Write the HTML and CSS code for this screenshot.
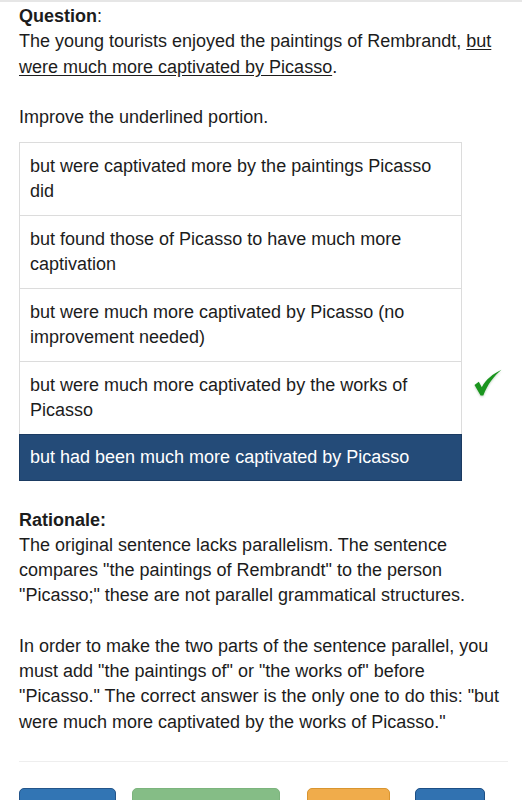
FILE: index.html
```html
<!DOCTYPE html>
<html>
<head>
<meta charset="utf-8">
<link rel="stylesheet" href="styles.css">
</head>
<body>
<div class="topbar"></div>
<div class="page">
  <div class="question">
    <div><b>Question</b>:</div>
    <p class="para">The young tourists enjoyed the paintings of Rembrandt, <span class="ul">but</span> <span class="ul">were much more captivated by Picasso</span>.</p>
    <div class="blank"></div>
    <p class="para">Improve the underlined portion.</p>
  </div>
  <div class="answers">
    <ul class="options">
      <li class="option">but were captivated more by the paintings Picasso did</li>
      <li class="option">but found those of Picasso to have much more captivation</li>
      <li class="option">but were much more captivated by Picasso (no improvement needed)</li>
      <li class="option">but were much more captivated by the works of Picasso</li>
      <li class="option selected">but had been much more captivated by Picasso</li>
    </ul>
    <div class="marks">
      <div class="mark"></div>
      <div class="mark"></div>
      <div class="mark"></div>
      <div class="mark tall">
        <svg class="check" width="28" height="28" viewBox="0 0 28 28">
          <path d="M0.5 16 L4.8 12.8 L7.8 18.2 C12 10.5 18.5 5 27.5 0.8 C20 7 13.5 15.5 9.3 26.5 L6.6 26.5 Z" fill="#1a951e"/>
        </svg>
      </div>
    </div>
  </div>
  <div class="rationale">
    <div><b>Rationale:</b></div>
    <p class="para">The original sentence lacks parallelism. The sentence compares "the paintings of Rembrandt" to the person "Picasso;" these are not parallel grammatical structures.</p>
    <div class="blank"></div>
    <p class="para">In order to make the two parts of the sentence parallel, you must add "the paintings of" or "the works of" before "Picasso." The correct answer is the only one to do this: "but were much more captivated by the works of Picasso."</p>
  </div>
  <hr class="rule">
  <div class="buttons">
    <div class="btn btn-blue b1"></div>
    <div class="btn btn-green b2"></div>
    <div class="btn btn-orange b3"></div>
    <div class="btn btn-navy b4"></div>
  </div>
</div>
</body>
</html>
```

FILE: styles.css
```css
html, body {
  margin: 0;
  padding: 0;
  background: #ffffff;
}
body {
  font-family: "Liberation Sans", Arial, Helvetica, sans-serif;
  font-size: 18px;
  line-height: 25.25px;
  color: #1c1c1c;
  overflow: hidden;
}
.topbar {
  height: 2px;
  background: #e6e6e6;
}
.page {
  padding: 2px 14px 0 19px;
}
.para {
  margin: 0;
}
.blank {
  height: 25.25px;
}
.ul {
  text-decoration: underline;
  text-underline-offset: 2px;
}
.answers {
  display: flex;
  margin-top: 12px;
}
.options {
  list-style: none;
  margin: 0;
  padding: 0;
  width: 443px;
}
.option {
  border: 1px solid #dcdcdc;
  padding: 10.75px 10px;
  margin: 0 0 -1px 0;
  color: #1c1c1c;
}
.option.selected {
  background: #244b78;
  border-color: #1b3b62;
  color: #ffffff;
  padding: 9.5px 10px;
}
.marks {
  flex: 1;
  display: flex;
  flex-direction: column;
}
.mark {
  height: 73px;
}
.mark.tall {
  padding: 8px 0 0 12px;
  box-sizing: border-box;
}
.check {
  display: block;
  filter: drop-shadow(0 1px 1px rgba(0, 80, 0, 0.25));
}
.rationale {
  margin-top: 28px;
}
.rule {
  border: 0;
  border-top: 1px solid #eeeeee;
  margin: 26px 0 26px 0;
  height: 0;
}
.buttons {
  display: flex;
}
.btn {
  height: 40px;
  border-radius: 5px;
  box-sizing: border-box;
}
.btn-blue {
  background: #3275b4;
  border: 1px solid #24558a;
}
.btn-green {
  background: #85bd86;
  border: 1px solid #7cb47d;
}
.btn-orange {
  background: #f0ac4b;
  border: 1px solid #d99530;
}
.btn-navy {
  background: #3172b1;
  border: 1px solid #1d4f85;
}
.b1 { width: 97px; }
.b2 { width: 148px; margin-left: 16px; }
.b3 { width: 83px; margin-left: 27px; }
.b4 { width: 70px; margin-left: 25px; }
```
